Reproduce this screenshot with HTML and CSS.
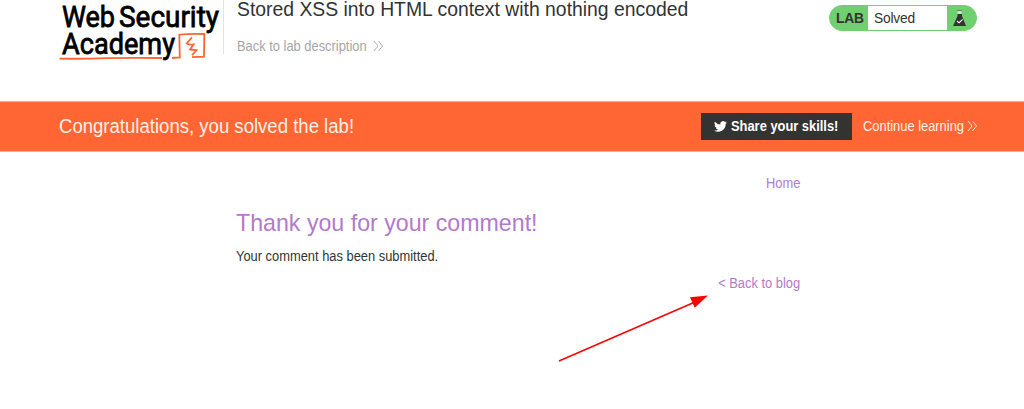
FILE: index.html
```
<!DOCTYPE html>
<html lang="en">
<head>
<meta charset="utf-8">
<title>Stored XSS into HTML context with nothing encoded</title>
<link rel="stylesheet" href="styles.css">
</head>
<body>
<header class="header">
  <a class="logo"><svg width="164" height="64" viewBox="0 0 164 64" role="img" aria-label="Web Security Academy">
    <text class="logo-text" x="3" y="27.300" textLength="53" lengthAdjust="spacingAndGlyphs">Web</text>
    <text class="logo-text" x="60" y="27.300" textLength="100" lengthAdjust="spacingAndGlyphs">Security</text>
    <text class="logo-text" x="3" y="53.500" textLength="113" lengthAdjust="spacingAndGlyphs">Academy</text>
    <path d="M0.500 58.600Q15 59 40 58.300T103 58M113 58L120.800 57.500L120.300 34.700Q132 33.500 145.300 34L145 56.700L133 57.200" fill="none" stroke="#ff6633" stroke-width="1.800"/>
    <path d="M133 37.300L127.700 43.500Q130 45 134.500 44.500L131 49.500L137.500 50.300L133 55.200" fill="none" stroke="#ff6633" stroke-width="1.800"/>
  </svg></a>
  <div class="title-block">
    <h1 class="title">Stored XSS into HTML context with nothing encoded</h1>
    <a class="description"><span class="narrow">Back to lab description</span><svg width="11" height="12" viewBox="0 0 11 12"><path class="chevron" d="M1 1L5 6L1 11M5.500 1L9.500 6L5.500 11"/></svg></a>
  </div>
  <div class="status">
    <span class="lab">LAB</span>
    <span class="solved">Solved</span>
    <svg class="flask" width="15" height="18" viewBox="0 0 15 18"><path d="M5.500 5h4.500v2L14 17H1L5.500 7z" fill="#333332"/><path d="M5.500 1.500v3.500h4V1.500" fill="#c1edbd"/><path d="M5 1.500h5" stroke="#777"/><path d="M5 12l2 1.800 3.500-3.300" fill="none" stroke="#fff" stroke-width="1.100"/></svg>
  </div>
</header>
<section class="banner">
  <h2 class="congrats"><span>Congratulations, you solved the lab!</span></h2>
  <a class="share"><svg width="13" height="11" viewBox="0 0 24 20"><path fill="#fff" d="M24 2.400a10 10 0 0 1-2.800.8A5 5 0 0 0 23.300.5a10 10 0 0 1-3.100 1.200 4.900 4.900 0 0 0-8.400 4.500A14 14 0 0 1 1.700 1a4.900 4.900 0 0 0 1.500 6.600A5 5 0 0 1 1 7a4.900 4.900 0 0 0 3.900 4.900 5 5 0 0 1-2.200.1 4.900 4.900 0 0 0 4.600 3.400A10 10 0 0 1 0 17.500 14 14 0 0 0 21.500 5 10 10 0 0 0 24 2.400z"/></svg><span class="narrow">Share your skills!</span></a>
  <a class="continue"><span class="narrow">Continue learning</span><svg width="11" height="12" viewBox="0 0 11 12"><path class="chevron" d="M1 1L5 6L1 11M5.500 1L9.500 6L5.500 11"/></svg></a>
</section>
<main class="content">
  <nav class="nav"><a class="narrow narrow-end">Home</a></nav>
  <h1 class="thanks">Thank you for your comment!</h1>
  <p class="message"><span class="narrow">Your comment has been submitted.</span></p>
  <div class="back"><a class="narrow narrow-end">&lt; Back to blog</a></div>
</main>
<svg class="arrow" width="152" height="70" viewBox="0 0 152 70"><path d="M2 68L138 9" stroke="#f00" stroke-width="1.500"/><path d="M151 2.500L133 4.300L137.700 14.800z" fill="#f00"/></svg>
</body>
</html>
```
FILE: styles.css
```
body {
  margin: 0;
  height: 409px;
  overflow: hidden;
  background: #fff;
  color: #333332;
  font: 14px/16px "Liberation Sans", Arial, sans-serif;
}
h1, h2, p { margin: 0; font-weight: 400; }
svg { display: block; flex: none; }
.narrow { display: inline-block; white-space: nowrap; transform: scaleX(.92); transform-origin: left; }
.narrow-end { transform-origin: right; }
.header {
  display: flex;
  align-items: flex-start;
  height: 101px;
  padding: 0 47px 0 59px;
  box-sizing: border-box;
}
.logo { height: 54px; border-right: 1px solid #e3e3e3; }
.logo svg { overflow: visible; }
.logo-text { font: 400 30px/1 Roboto, sans-serif; fill: #000; stroke: #000; stroke-width: .8px; }
.title-block { flex: 1; padding-left: 13px; }
.title { font-size: 20px; line-height: 22px; margin-top: -2px; white-space: nowrap; transform: scaleX(.968); transform-origin: left; }
.description { display: flex; align-items: center; justify-content: space-between; width: 147px; margin-top: 18px; color: #a6a6a6; }
.description .narrow { width: 130px; }
.chevron { fill: none; stroke: currentColor; stroke-width: .9; }
.status {
  display: flex;
  align-items: center;
  box-sizing: border-box;
  width: 148px;
  height: 26px;
  margin-top: 5px;
  border: 1px solid #70d070;
  border-radius: 13px;
  background: #70d070;
  letter-spacing: -.2px;
}
.lab { width: 38px; box-sizing: border-box; padding: 1px 0 0 6px; font-size: 13.8px; font-weight: 700; }
.solved { width: 79px; height: 24px; box-sizing: border-box; padding-left: 6px; background: #fff; font-size: 13.8px; line-height: 25px; }
.flask { margin-left: 5px; }
.banner {
  display: flex;
  align-items: center;
  box-sizing: border-box;
  height: 51px;
  padding: 0 46px 0 59px;
  border-top: 1px solid #ffad92;
  border-bottom: 1px solid #ffad92;
  background: #ff6633;
  color: #fff0ea;
}
.congrats { flex: 1; padding-bottom: 2px; font-size: 19.4px; line-height: 24px; }
.congrats span { display: inline-block; transform: scaleX(.957); transform-origin: left; }
.share {
  display: flex;
  align-items: center;
  gap: 4px;
  box-sizing: border-box;
  width: 151px;
  height: 27px;
  padding-left: 13px;
  margin-right: 11px;
  margin-bottom: 1px;
  background: #333332;
  color: #fff;
  font-weight: 700;
}
.continue { display: flex; align-items: center; justify-content: space-between; width: 115px; padding-bottom: 1px; }
.continue .narrow { width: 102px; }
.content { width: 564px; margin-left: 236px; }
.nav { padding-top: 23px; height: 16px; text-align: right; color: #b27ac9; }
.thanks { margin-top: 18px; font-size: 24px; line-height: 28px; color: #b27ac9; transform: scaleX(.966); transform-origin: left; }
.message { height: 16px; margin-top: 11px; }
.back { margin-top: 11px; text-align: right; color: #b27ac9; }
.arrow { position: absolute; left: 557px; top: 293px; }
```
